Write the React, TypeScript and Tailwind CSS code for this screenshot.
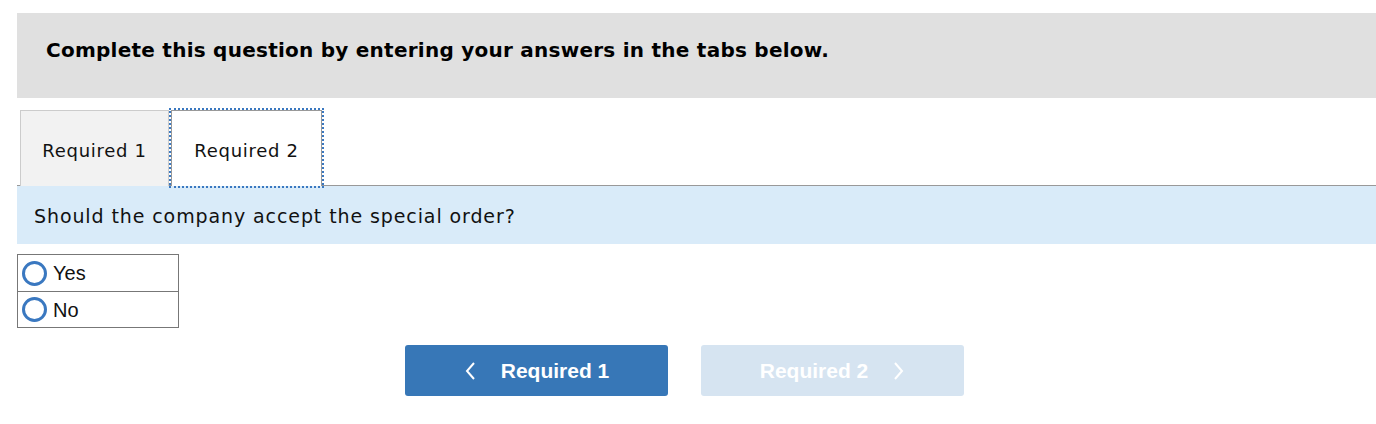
const ChevronLeft = () => (
  <svg width="12" height="20" viewBox="0 0 12 20" fill="none" stroke="currentColor" strokeWidth="2">
    <path d="M10 2 L3 10 L10 18" />
  </svg>
);

const ChevronRight = () => (
  <svg width="12" height="20" viewBox="0 0 12 20" fill="none" stroke="currentColor" strokeWidth="2">
    <path d="M2 2 L9 10 L2 18" />
  </svg>
);

const RadioRow = ({ label, last }: { label: string; last?: boolean }) => (
  <label className={`flex items-center pl-[4px] ${last ? "h-[35px]" : "h-[37px] border-b border-[#777]"}`}>
    <span className="box-border h-[25px] w-[25px] rounded-full border-[3px] border-[#3a78c0] bg-white" />
    <span className="ml-[6px] text-[20px] text-[#111] font-['Liberation_Sans',Arial,sans-serif]">{label}</span>
  </label>
);

export default function App() {
  return (
    <div className="min-h-[424px] bg-white pl-[17px] pt-[13px] font-['DejaVu_Sans',Verdana,sans-serif] text-black">
      <div className="flex h-[85px] items-center bg-[#e0e0e0] pb-[12px] pl-[29px]">
        <h1 className="text-[20px] font-bold tracking-[0.25px]">
          Complete this question by entering your answers in the tabs below.
        </h1>
      </div>

      <div className="mt-[12px] flex border-b border-[#999] pl-[3px]">
        <button className="-mb-px box-border flex h-[76px] w-[149px] items-center justify-center border border-b-0 border-[#ccc] bg-[#f2f2f2] pt-[3px] text-[18px] tracking-[0.7px] text-[#111]">
          Required 1
        </button>
        <button className="-mb-px ml-[2px] box-border flex h-[76px] w-[151px] items-center justify-center border border-b-0 border-[#999] bg-white pt-[3px] text-[18px] tracking-[0.7px] text-[#111] outline-2 outline-dotted outline-[#3a78c0]">
          Required 2
        </button>
      </div>

      <div className="flex h-[58px] items-center bg-[#d9ebf9] pl-[17px] pt-[3px] text-[19px] tracking-[0.9px] text-[#111]">
        Should the company accept the special order?
      </div>

      <div className="mt-[10px] w-[162px] border border-[#777]">
        <RadioRow label="Yes" />
        <RadioRow label="No" last />
      </div>

      <div className="mt-[17px] flex justify-center gap-[33px] pr-[24px] font-['Liberation_Sans',Arial,sans-serif]">
        <button className="flex h-[51px] w-[263px] items-center justify-center gap-[25px] rounded-[3px] bg-[#3777b7] text-[21px] font-bold text-white">
          <ChevronLeft />
          <span>Required 1</span>
        </button>
        <button className="flex h-[51px] w-[263px] items-center justify-center gap-[25px] rounded-[3px] bg-[#d6e4f1] text-[21px] font-bold text-white">
          <span>Required 2</span>
          <ChevronRight />
        </button>
      </div>
    </div>
  );
}
